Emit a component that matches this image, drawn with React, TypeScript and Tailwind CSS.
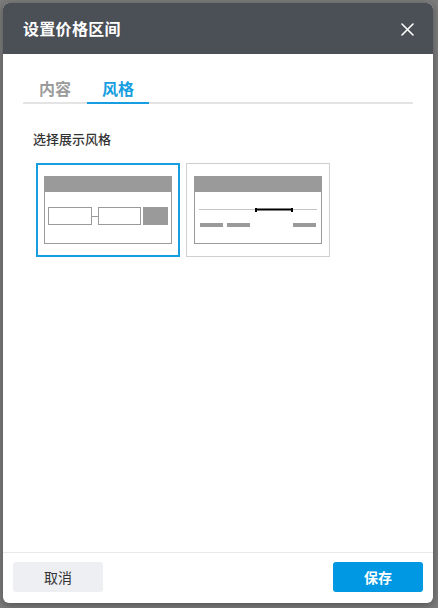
import React from "react";

const font = { fontFamily: '"Noto Sans", "Noto Sans CJK SC", sans-serif' };

function StyleA() {
  return (
    <div className="w-[128px] h-[68px] border border-[#9a9a9a] flex flex-col">
      <div className="h-[15px] bg-[#9a9a9a]" />
      <div className="flex items-center px-[3px] pt-[15px]">
        <div className="w-[44px] h-[18px] border border-[#9a9a9a] bg-white" />
        <div className="w-[6px] h-px bg-[#9a9a9a]" />
        <div className="w-[44px] h-[18px] border border-[#9a9a9a] bg-white" />
        <div className="w-[25px] h-[18px] bg-[#9a9a9a] ml-[2px]" />
      </div>
    </div>
  );
}

function StyleB() {
  return (
    <div className="w-[128px] h-[68px] border border-[#9a9a9a] flex flex-col">
      <div className="h-[15px] bg-[#9a9a9a]" />
      <div className="relative h-[3px] mt-[16px] mx-[4px]">
        <div className="absolute left-0 right-0 top-[1px] h-px bg-[#c4c4c4]" />
        <div className="absolute left-[56px] w-[38px] top-[1px] h-[2px] bg-black -translate-y-[0.5px]" />
        <div className="absolute left-[56px] w-[2px] top-0 h-[4px] bg-black" />
        <div className="absolute left-[92px] w-[2px] top-0 h-[4px] bg-black" />
      </div>
      <div className="flex mt-[12px] px-[5px]">
        <div className="w-[23px] h-[4px] bg-[#9a9a9a]" />
        <div className="w-[23px] h-[4px] bg-[#9a9a9a] ml-[4px]" />
        <div className="w-[23px] h-[4px] bg-[#9a9a9a] ml-auto" />
      </div>
    </div>
  );
}

export default function App() {
  return (
    <div className="w-[438px] h-[608px] bg-[#7c7c7c] p-[3px] pr-[5px] pb-[5px]" style={font}>
      <div className="w-[430px] h-[600px] bg-white rounded-[6px] overflow-hidden flex flex-col shadow-[0_2px_8px_rgba(0,0,0,0.35)]">
        <div className="h-[51px] bg-[#4b4f56] flex items-center justify-between pl-[20px] pr-[19px] shrink-0">
          <span className="text-white text-[16px] font-bold tracking-[0.3px]">设置价格区间</span>
          <svg width="13" height="13" viewBox="0 0 13 13" className="mt-[1px]">
            <path d="M1 1L12 12M12 1L1 12" stroke="white" strokeWidth="1.6" strokeLinecap="round" />
          </svg>
        </div>
        <div className="flex-1 px-[20px] pt-[24px]">
          <div className="flex border-b-[2px] border-[#e4e4e4] h-[26px]">
            <div className="w-[64px] flex justify-center text-[16px] font-bold text-[#9b9b9b] leading-[22px]">内容</div>
            <div className="w-[62px] flex justify-center text-[16px] font-bold text-[#169ee0] leading-[22px] border-b-[2px] border-[#169ee0] -mb-[2px]">风格</div>
          </div>
          <div className="pl-[10px] pt-[26px] text-[13px] text-[#333] font-medium leading-[18px]">选择展示风格</div>
          <div className="flex gap-[6px] pl-[13px] pt-[15px]">
            <div className="w-[144px] h-[94px] border-2 border-[#169ee0] flex items-center justify-center">
              <StyleA />
            </div>
            <div className="w-[144px] h-[94px] border border-[#cfcfcf] flex items-center justify-center">
              <StyleB />
            </div>
          </div>
        </div>
        <div className="h-[51px] border-t border-[#e8e8e8] flex items-center justify-between px-[10px] pb-[2px] shrink-0">
          <button className="w-[90px] h-[30px] rounded-[3px] bg-[#eeeff2] text-[#333] text-[14px]">取消</button>
          <button className="w-[90px] h-[30px] rounded-[3px] bg-[#0098e3] text-white text-[14px] font-bold">保存</button>
        </div>
      </div>
    </div>
  );
}
